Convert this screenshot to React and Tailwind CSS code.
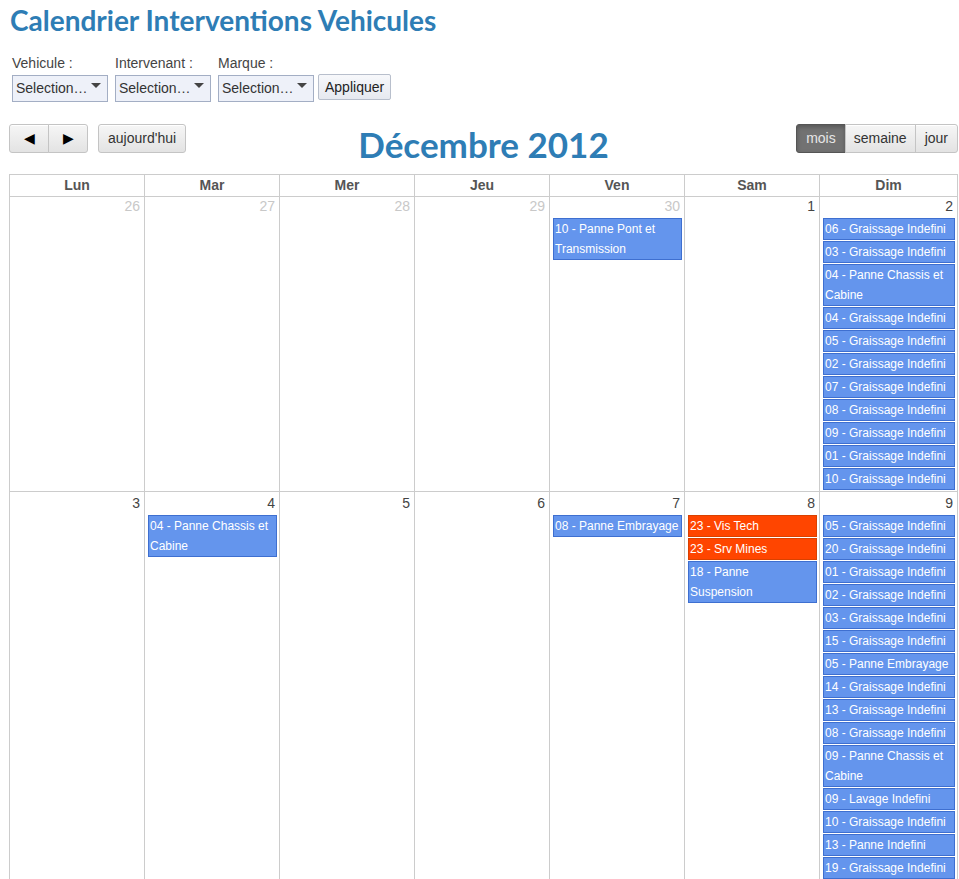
const days = ['Lun', 'Mar', 'Mer', 'Jeu', 'Ven', 'Sam', 'Dim']

const g = (n) => ({ label: `${n} - Graissage Indefini` })

const weeks = [
  [
    { num: 26, other: true, events: [] },
    { num: 27, other: true, events: [] },
    { num: 28, other: true, events: [] },
    { num: 29, other: true, events: [] },
    { num: 30, other: true, events: [{ label: '10 - Panne Pont et Transmission' }] },
    { num: 1, events: [] },
    {
      num: 2,
      events: [
        g('06'),
        g('03'),
        { label: '04 - Panne Chassis et Cabine' },
        g('04'),
        g('05'),
        g('02'),
        g('07'),
        g('08'),
        g('09'),
        g('01'),
        g('10'),
      ],
    },
  ],
  [
    { num: 3, events: [] },
    { num: 4, events: [{ label: '04 - Panne Chassis et Cabine' }] },
    { num: 5, events: [] },
    { num: 6, events: [] },
    { num: 7, events: [{ label: '08 - Panne Embrayage' }] },
    {
      num: 8,
      events: [
        { label: '23 - Vis Tech', hot: true },
        { label: '23 - Srv Mines', hot: true },
        { label: '18 - Panne\nSuspension' },
      ],
    },
    {
      num: 9,
      events: [
        g('05'),
        g('20'),
        g('01'),
        g('02'),
        g('03'),
        g('15'),
        { label: '05 - Panne Embrayage' },
        g('14'),
        g('13'),
        g('08'),
        { label: '09 - Panne Chassis et Cabine' },
        { label: '09 - Lavage Indefini' },
        g('10'),
        { label: '13 - Panne Indefini' },
        g('19'),
        g('11'),
        g('12'),
      ],
    },
  ],
]

const Select = ({ label }) => (
  <div className="flex flex-col">
    <span className="text-[14px] leading-[18px] text-[#444]">{label}</span>
    <div className="mt-[3px] flex h-[27px] w-[96px] items-center justify-between border border-[#a3aec4] bg-[#eef1f9] pl-[3px] pr-[6px] text-[14px] text-[#333]">
      <span>Selection…</span>
      <span className="mb-[7px] h-0 w-0 border-l-[5px] border-r-[5px] border-t-[5px] border-l-transparent border-r-transparent border-t-[#444]" />
    </div>
  </div>
)

const btn =
  'flex items-center border border-[#c4c4c4] bg-gradient-to-b from-[#f6f6f6] to-[#e3e3e3] text-[14px] text-[#333] shadow-[inset_0_1px_0_#fff]'

function Event({ label, hot }) {
  return (
    <div
      className={`mb-[1px] ml-[3px] mr-[2px] whitespace-pre-line border px-[1px] text-[12px] leading-[20px] text-white ${
        hot ? 'border-[#d94100] bg-[#ff4500]' : 'border-[#3e6fd0] bg-[#6495ed]'
      }`}
    >
      {label}
    </div>
  )
}

export default function App() {
  return (
    <div className="min-h-screen bg-white pl-[9px] pr-[1px] pt-[4px] font-['Liberation_Sans',Arial,sans-serif]">
      <h1 className="pl-[1px] font-['Lato',sans-serif] text-[28px] font-bold leading-[32px] text-[#2e7db5]">
        Calendrier Interventions Vehicules
      </h1>

      <div className="mt-[18px] flex items-end gap-[7px] pl-[3px]">
        <Select label="Vehicule :" />
        <Select label="Intervenant :" />
        <Select label="Marque :" />
        <button className="mb-[2px] -ml-[3px] h-[26px] rounded-[2px] border border-[#b8bfcc] bg-gradient-to-b from-[#f7f8fb] to-[#e6e9f0] px-[6px] text-[14px] text-[#222]">
          Appliquer
        </button>
      </div>

      <div className="mt-[22px] grid h-[29px] grid-cols-[1fr_auto_1fr] items-start">
        <div className="flex gap-[10px]">
          <div className="flex">
            <div className={`${btn} h-[29px] w-[40px] justify-center rounded-l-[3px] text-[12px] text-black`}>◀</div>
            <div className={`${btn} -ml-px h-[29px] w-[40px] justify-center rounded-r-[3px] text-[12px] text-black`}>▶</div>
          </div>
          <div className={`${btn} h-[29px] rounded-[3px] px-[9px]`}>aujourd'hui</div>
        </div>
        <h2 className="font-['Lato',sans-serif] text-[35px] font-bold leading-[40px] text-[#2e7db5]">
          Décembre 2012
        </h2>
        <div className="flex justify-end">
          <div className="flex h-[29px] items-center rounded-l-[3px] border border-[#555] bg-[#727272] px-[9px] text-[14px] text-[#e6e6e6] shadow-[inset_0_2px_4px_rgba(0,0,0,0.25)]">
            mois
          </div>
          <div className={`${btn} -ml-px h-[29px] px-[8px]`}>semaine</div>
          <div className={`${btn} -ml-px h-[29px] rounded-r-[3px] px-[9px]`}>jour</div>
        </div>
      </div>

      <div className="mt-[21px] border-l border-t border-[#ccc]">
        <div className="grid grid-cols-[135px_135px_135px_135px_135px_135px_1fr]">
          {days.map((d) => (
            <div
              key={d}
              className="h-[22px] border-b border-r border-[#ccc] text-center text-[14px] font-bold leading-[21px] text-[#555]"
            >
              {d}
            </div>
          ))}
        </div>
        {weeks.map((week, wi) => (
          <div key={wi} className="grid grid-cols-[135px_135px_135px_135px_135px_135px_1fr]">
            {week.map((cell) => (
              <div
                key={cell.num}
                className={`border-b border-r border-[#ccc] ${wi === 0 ? 'min-h-[295px]' : 'min-h-[400px]'}`}
              >
                <div
                  className={`pr-[4px] text-right text-[14px] leading-[18px] ${
                    cell.other ? 'text-[#c8c8c8]' : 'text-[#444]'
                  } ${wi === 1 ? 'mt-[2px]' : ''}`}
                >
                  {cell.num}
                </div>
                <div className="mt-[3px]">
                  {cell.events.map((e, i) => (
                    <Event key={i} {...e} />
                  ))}
                </div>
              </div>
            ))}
          </div>
        ))}
      </div>
    </div>
  )
}
